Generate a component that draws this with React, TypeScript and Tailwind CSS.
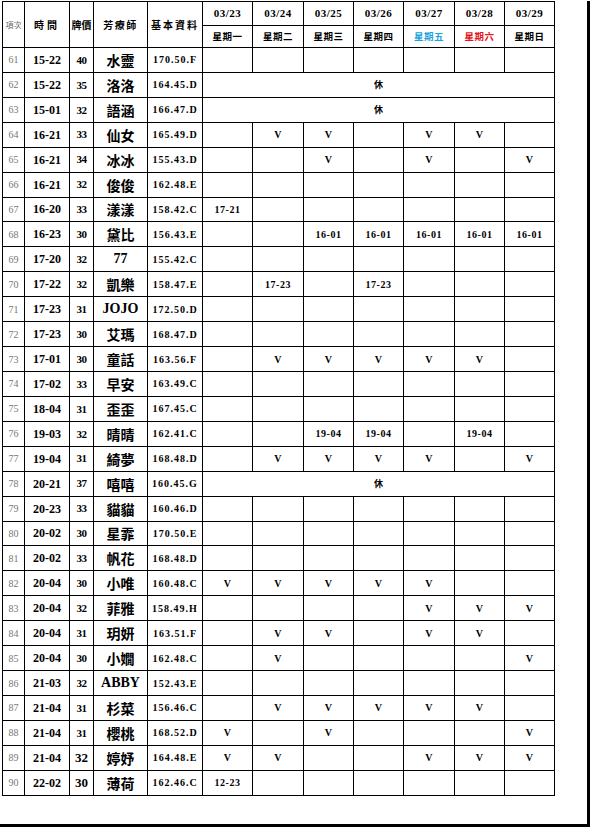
import React from 'react';

type Row = {
  no: number;
  time: string;
  price: string;
  name: string;
  info: string;
  // seven day cells, or 'off' for a whole-week rest day
  days: string[] | 'off';
  bigPrice?: boolean;
};

const E = ['', '', '', '', '', '', ''];
const V = 'V';

const DATES = ['03/23', '03/24', '03/25', '03/26', '03/27', '03/28', '03/29'];
const WEEK = ['星期一', '星期二', '星期三', '星期四', '星期五', '星期六', '星期日'];

const ROWS: Row[] = [
  { no: 61, time: '15-22', price: '40', name: '水靈', info: '170.50.F', days: E },
  { no: 62, time: '15-22', price: '35', name: '洛洛', info: '164.45.D', days: 'off' },
  { no: 63, time: '15-01', price: '32', name: '語涵', info: '166.47.D', days: 'off' },
  { no: 64, time: '16-21', price: '33', name: '仙女', info: '165.49.D', days: ['', V, V, '', V, V, ''] },
  { no: 65, time: '16-21', price: '34', name: '冰冰', info: '155.43.D', days: ['', '', V, '', V, '', V] },
  { no: 66, time: '16-21', price: '32', name: '俊俊', info: '162.48.E', days: E },
  { no: 67, time: '16-20', price: '33', name: '漾漾', info: '158.42.C', days: ['17-21', '', '', '', '', '', ''] },
  { no: 68, time: '16-23', price: '30', name: '黛比', info: '156.43.E', days: ['', '', '16-01', '16-01', '16-01', '16-01', '16-01'] },
  { no: 69, time: '17-20', price: '32', name: '77', info: '155.42.C', days: E },
  { no: 70, time: '17-22', price: '32', name: '凱樂', info: '158.47.E', days: ['', '17-23', '', '17-23', '', '', ''] },
  { no: 71, time: '17-23', price: '31', name: 'JOJO', info: '172.50.D', days: E },
  { no: 72, time: '17-23', price: '30', name: '艾瑪', info: '168.47.D', days: E },
  { no: 73, time: '17-01', price: '30', name: '童話', info: '163.56.F', days: ['', V, V, V, V, V, ''] },
  { no: 74, time: '17-02', price: '33', name: '早安', info: '163.49.C', days: E },
  { no: 75, time: '18-04', price: '31', name: '歪歪', info: '167.45.C', days: E },
  { no: 76, time: '19-03', price: '32', name: '晴晴', info: '162.41.C', days: ['', '', '19-04', '19-04', '', '19-04', ''] },
  { no: 77, time: '19-04', price: '31', name: '綺夢', info: '168.48.D', days: ['', V, V, V, V, '', V] },
  { no: 78, time: '20-21', price: '37', name: '嘻嘻', info: '160.45.G', days: 'off' },
  { no: 79, time: '20-23', price: '33', name: '貓貓', info: '160.46.D', days: E },
  { no: 80, time: '20-02', price: '30', name: '星霏', info: '170.50.E', days: E },
  { no: 81, time: '20-02', price: '33', name: '帆花', info: '168.48.D', days: E },
  { no: 82, time: '20-04', price: '30', name: '小唯', info: '160.48.C', days: [V, V, V, V, V, '', ''] },
  { no: 83, time: '20-04', price: '32', name: '菲雅', info: '158.49.H', days: ['', '', '', '', V, V, V] },
  { no: 84, time: '20-04', price: '31', name: '玥妍', info: '163.51.F', days: ['', V, V, '', V, V, ''] },
  { no: 85, time: '20-04', price: '30', name: '小嫺', info: '162.48.C', days: ['', V, '', '', '', '', V] },
  { no: 86, time: '21-03', price: '32', name: 'ABBY', info: '152.43.E', days: E },
  { no: 87, time: '21-04', price: '31', name: '杉菜', info: '156.46.C', days: ['', V, V, V, V, V, ''] },
  { no: 88, time: '21-04', price: '31', name: '櫻桃', info: '168.52.D', days: [V, '', V, '', '', '', V] },
  { no: 89, time: '21-04', price: '32', name: '婷妤', info: '164.48.E', days: [V, V, '', '', V, V, V], bigPrice: true },
  { no: 90, time: '22-02', price: '30', name: '薄荷', info: '162.46.C', days: ['12-23', '', '', '', '', '', ''], bigPrice: true },
];

const serif = "font-['Liberation_Serif','Noto_Sans_CJK_TC',serif]";
const cjk = "font-['Noto_Sans_CJK_TC','Liberation_Sans',sans-serif]";

const cell = 'border border-black p-0 text-center align-middle';

function weekColor(i: number) {
  if (i === 4) return 'text-[#1ba3dc]';
  if (i === 5) return 'text-[#e4141b]';
  return 'text-black';
}

export default function App() {
  return (
    <div className="w-[590px] h-[826px] bg-white border-r-[3px] border-b-[3px] border-black">
      <table className="ml-[2px] mt-[1px] w-[552px] table-fixed border-collapse text-black">
        <colgroup>
          <col className="w-[22px]" />
          <col className="w-[45px]" />
          <col className="w-[24px]" />
          <col className="w-[54px]" />
          <col className="w-[55px]" />
          <col className="w-[50px]" />
          <col className="w-[51px]" />
          <col className="w-[50px]" />
          <col className="w-[50px]" />
          <col className="w-[51px]" />
          <col className="w-[50px]" />
          <col className="w-[50px]" />
        </colgroup>
        <thead>
          <tr className="h-[24px]">
            <th rowSpan={2} className={`${cell} ${cjk} text-[8px] font-normal text-[#666]`}>
              項次
            </th>
            <th rowSpan={2} className={`${cell} ${cjk} text-[10px] font-bold tracking-[3px]`}>
              時間
            </th>
            <th rowSpan={2} className={`${cell} ${cjk} text-[10px] font-bold`}>
              牌價
            </th>
            <th rowSpan={2} className={`${cell} ${cjk} text-[10px] font-bold tracking-[1.5px]`}>
              芳療師
            </th>
            <th rowSpan={2} className={`${cell} ${cjk} text-[10px] font-bold tracking-[2px]`}>
              基本資料
            </th>
            {DATES.map((d) => (
              <th key={d} className={`${cell} ${serif} text-[11px] font-bold tracking-[0.5px]`}>
                {d}
              </th>
            ))}
          </tr>
          <tr className="h-[22px]">
            {WEEK.map((w, i) => (
              <th key={w} className={`${cell} ${cjk} text-[9.5px] font-bold tracking-[0.5px] ${weekColor(i)}`}>
                {w}
              </th>
            ))}
          </tr>
        </thead>
        <tbody>
          {ROWS.map((r) => (
            <tr key={r.no} className="h-[24.93px]">
              <td className={`${cell} ${serif} text-[10px] text-[#777]`}>{r.no}</td>
              <td className={`${cell} ${serif} text-[12px] font-bold`}>{r.time}</td>
              <td className={`${cell} ${serif} font-bold ${r.bigPrice ? 'text-[13px]' : 'text-[11px] tracking-[-0.5px]'}`}>
                {r.price}
              </td>
              <td className={`${cell} ${/^[A-Z0-9]+$/.test(r.name) ? serif : cjk} text-[14px] font-bold leading-none`}>
                {r.name}
              </td>
              <td className={`${cell} ${serif} text-[10px] font-bold tracking-[1px]`}>{r.info}</td>
              {r.days === 'off' ? (
                <td colSpan={7} className={`${cell} ${cjk} text-[9px] font-bold`}>
                  休
                </td>
              ) : (
                r.days.map((d, i) => (
                  <td key={i} className={`${cell} ${serif} text-[10px] font-bold tracking-[0.5px]`}>
                    {d}
                  </td>
                ))
              )}
            </tr>
          ))}
        </tbody>
      </table>
    </div>
  );
}
